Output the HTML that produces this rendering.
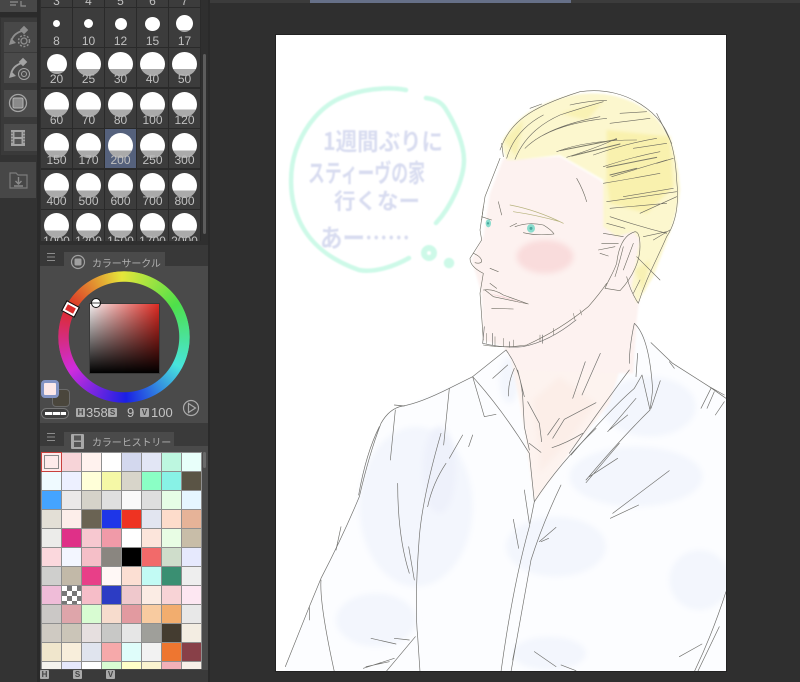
<!DOCTYPE html>
<html lang="ja"><head><meta charset="utf-8"><title>Clip Studio</title>
<style>
*{box-sizing:border-box}
html,body{margin:0;padding:0;width:800px;height:682px;overflow:hidden;background:#2f2f2f;font-family:"Liberation Sans","Noto Sans CJK JP",sans-serif}
.a{position:absolute}
#grid{left:41px;top:0;width:160px;height:241px;overflow:hidden;background:#2a2a2a}
.c{position:absolute;width:31px;height:39px;background:#3c3c3c;overflow:hidden}
.c i{position:absolute;display:block;border-radius:50%;background:linear-gradient(#fff 0,#fff 70%,#aaa 70%)}
.c i.d{background:#fff}
.c b{position:absolute;left:-4px;right:-4px;text-align:center;font-weight:400;font-size:12px;line-height:13px;color:#c0c0c0;top:27px}
.s{position:absolute;width:19px;height:18px}
.btn{position:absolute;left:4px;width:33px;background:#4a4a4a}
.tab{font-size:10px;color:#b0b0b0;white-space:nowrap;letter-spacing:-.1px}
.hsv{position:absolute;font-size:13px;color:#c4c4c4;line-height:14px;white-space:nowrap}
.k{position:absolute;width:9px;height:9px;background:#aaa;color:#444;font-size:8px;line-height:9px;text-align:center;font-weight:700;border-radius:1px}
</style></head><body>

<div class="a" style="left:0;top:0;width:38px;height:682px;background:#333"></div>
<div class="a" style="left:37px;top:0;width:3px;height:682px;background:#2a2a2a"></div>
<div class="a" style="left:208px;top:0;width:2px;height:682px;background:#2a2a2a"></div>
<div class="a" style="left:310px;top:0;width:261px;height:3px;background:#667088"></div>
<div class="a" style="left:210px;top:0;width:100px;height:3px;background:#3c3c3c"></div>
<div class="a" style="left:571px;top:0;width:229px;height:3px;background:#3c3c3c"></div>

<!-- toolbar -->
<div class="a" style="left:0;top:0;width:37px;height:12px;background:#474747"></div>
<div class="a" style="left:0;top:12px;width:37px;height:5px;background:#2b2b2b"></div>
<div class="a" style="left:1px;top:18px;width:36px;height:137px;background:#3a3a3a"></div>
<div class="btn" style="top:22px;height:30px;background:#484848"></div>
<div class="btn" style="top:53px;height:30px;background:#4a4a4a"></div>
<div class="btn" style="top:90px;height:27px;background:#4b4b4b"></div>
<div class="btn" style="top:124px;height:27px;background:#4b4b4b"></div>
<div class="a" style="left:0;top:162px;width:36px;height:36px;background:#474747"></div>
<svg class="a" style="left:0;top:0" width="40" height="200" fill="none" stroke="#8e8e8e">
 <path d="M10 2h8M10 5h6M21 1v5h5" stroke-width="1.2"/>
 <path d="M11 43Q12 34 22 31" stroke-width="1.800"/><path d="M9 45l7-2-5-5z" fill="#8e8e8e" stroke="none"/>
 <rect x="21" y="27" width="6" height="6" transform="rotate(45 24 30)" fill="#8e8e8e" stroke="none"/>
 <circle cx="24" cy="41" r="3" stroke-width="1.300"/><circle cx="24" cy="41" r="5.500" stroke-width="1.500" stroke-dasharray="2 1.6"/>
 <path d="M11 75Q12 66 22 63" stroke-width="1.800" stroke="#a4a4a4"/><path d="M9 78l7-2-5-5z" fill="#a4a4a4" stroke="none"/>
 <rect x="20" y="59" width="6" height="6" transform="rotate(45 23 62)" fill="#a4a4a4" stroke="none"/>
 <circle cx="24" cy="74" r="5.500" stroke="#a4a4a4"/><circle cx="24" cy="74" r="2.500" stroke="#a4a4a4"/>
 <circle cx="18" cy="103" r="8.500" stroke="#a4a4a4" stroke-width="1.300"/>
 <rect x="13" y="98" width="10" height="10" rx="1.500" fill="#8a8a8a" stroke="#b4b4b4"/>
 <rect x="11" y="130" width="14" height="16" fill="#a4a4a4" stroke="none"/>
 <rect x="14.500" y="132" width="7" height="5" fill="#555" stroke="none"/><rect x="14.500" y="139" width="7" height="5" fill="#555" stroke="none"/>
 <path d="M12 132v12M24 132v12" stroke="#555" stroke-width="1" stroke-dasharray="2 1"/>
 <path d="M10 173h6l2 2h9v13H10z" stroke="#7c7c7c" stroke-width="1.200"/>
 <path d="M18.500 177v6M15.500 181l3 3 3-3M14 186h9" stroke="#8a8a8a" stroke-width="1.400"/>
</svg>

<!-- brush grid -->
<div class="a" id="grid">
<div class="c" style="left:0;top:-32px"><b>3</b></div><div class="c" style="left:32px;top:-32px"><b>4</b></div><div class="c" style="left:64px;top:-32px"><b>5</b></div><div class="c" style="left:96px;top:-32px"><b>6</b></div><div class="c" style="left:128px;top:-32px"><b>7</b></div>
<div class="c" style="left:0;top:8px"><i class="d" style="left:12px;top:12px;width:7px;height:7px"></i><b>8</b></div>
<div class="c" style="left:32px;top:8px"><i class="d" style="left:11px;top:11px;width:9px;height:9px"></i><b>10</b></div>
<div class="c" style="left:64px;top:8px"><i class="d" style="left:10px;top:10px;width:12px;height:12px"></i><b>12</b></div>
<div class="c" style="left:96px;top:8px"><i class="d" style="left:8px;top:9px;width:15px;height:14px"></i><b>15</b></div>
<div class="c" style="left:128px;top:8px"><i style="left:7px;top:7px;width:17px;height:17px;background:linear-gradient(#fff 88%,#aaa 88%)"></i><b>17</b></div>
<div class="c" style="left:0;top:48px"><i style="left:6px;top:6px;width:20px;height:20px;background:linear-gradient(#fff 85%,#aaa 85%)"></i><b style="top:25px">20</b></div>
<div class="c" style="left:32px;top:48px"><i style="left:3px;top:4px;width:25px;height:24px"></i><b style="top:25px">25</b></div>
<div class="c" style="left:64px;top:48px"><i style="left:3px;top:4px;width:25px;height:24px"></i><b style="top:25px">30</b></div>
<div class="c" style="left:96px;top:48px"><i style="left:3px;top:4px;width:25px;height:24px"></i><b style="top:25px">40</b></div>
<div class="c" style="left:128px;top:48px"><i style="left:3px;top:4px;width:25px;height:24px"></i><b style="top:25px">50</b></div>
<div class="c" style="left:0;top:89px"><i style="left:3px;top:3px;width:25px;height:25px"></i><b style="top:25px">60</b></div>
<div class="c" style="left:32px;top:89px"><i style="left:3px;top:3px;width:25px;height:25px"></i><b style="top:25px">70</b></div>
<div class="c" style="left:64px;top:89px"><i style="left:3px;top:3px;width:25px;height:25px"></i><b style="top:25px">80</b></div>
<div class="c" style="left:96px;top:89px"><i style="left:3px;top:3px;width:25px;height:25px"></i><b style="top:25px">100</b></div>
<div class="c" style="left:128px;top:89px"><i style="left:3px;top:3px;width:25px;height:25px"></i><b style="top:25px">120</b></div>
<div class="c" style="left:0;top:129px"><i style="left:3px;top:4px;width:25px;height:25px"></i><b style="top:25px">150</b></div>
<div class="c" style="left:32px;top:129px"><i style="left:3px;top:4px;width:25px;height:25px"></i><b style="top:25px">170</b></div>
<div class="c" style="left:64px;top:129px;background:#55617c"><i style="left:3px;top:4px;width:25px;height:25px"></i><b style="top:25px">200</b></div>
<div class="c" style="left:96px;top:129px"><i style="left:3px;top:4px;width:25px;height:25px"></i><b style="top:25px">250</b></div>
<div class="c" style="left:128px;top:129px"><i style="left:3px;top:4px;width:25px;height:25px"></i><b style="top:25px">300</b></div>
<div class="c" style="left:0;top:170px"><i style="left:3px;top:3px;width:25px;height:25px"></i><b style="top:25px">400</b></div>
<div class="c" style="left:32px;top:170px"><i style="left:3px;top:3px;width:25px;height:25px"></i><b style="top:25px">500</b></div>
<div class="c" style="left:64px;top:170px"><i style="left:3px;top:3px;width:25px;height:25px"></i><b style="top:25px">600</b></div>
<div class="c" style="left:96px;top:170px"><i style="left:3px;top:3px;width:25px;height:25px"></i><b style="top:25px">700</b></div>
<div class="c" style="left:128px;top:170px"><i style="left:3px;top:3px;width:25px;height:25px"></i><b style="top:25px">800</b></div>
<div class="c" style="left:0;top:210px"><i style="left:3px;top:3px;width:25px;height:25px"></i><b style="top:25px">1000</b></div>
<div class="c" style="left:32px;top:210px"><i style="left:3px;top:3px;width:25px;height:25px"></i><b style="top:25px">1200</b></div>
<div class="c" style="left:64px;top:210px"><i style="left:3px;top:3px;width:25px;height:25px"></i><b style="top:25px">1500</b></div>
<div class="c" style="left:96px;top:210px"><i style="left:3px;top:3px;width:25px;height:25px"></i><b style="top:25px">1700</b></div>
<div class="c" style="left:128px;top:210px"><i style="left:3px;top:3px;width:25px;height:25px"></i><b style="top:25px">2000</b></div>
</div>
<div class="a" style="left:40px;top:0;width:168px;height:245px;background:#333;z-index:-1"></div>
<div class="a" style="left:203px;top:54px;width:3px;height:180px;background:#5c5c5c;border-radius:2px"></div>

<!-- colour circle panel -->
<div class="a" style="left:40px;top:245px;width:168px;height:178px;background:#4a4a4a"></div>
<div class="a" style="left:40px;top:245px;width:168px;height:21px;background:#383838"></div>
<div class="a" style="left:64px;top:252px;width:101px;height:14px;background:#4a4a4a"></div>
<svg class="a" style="left:46px;top:251px" width="14" height="12" stroke="#8c8c8c" stroke-width="1.100"><path d="M1 2.500h8M1 6h8M1 9.500h8"/></svg>
<svg class="a" style="left:70px;top:254px" width="16" height="16" fill="none"><circle cx="8" cy="8" r="6.500" stroke="#a0a0a0" stroke-width="1.200"/><rect x="4.500" y="4.500" width="7" height="7" rx="1.200" fill="#a0a0a0"/></svg>
<div class="a tab" style="left:92px;top:255px">カラーサークル</div>

<div class="a" style="left:58px;top:271px;width:132px;height:132px;border-radius:50%;background:conic-gradient(from -62deg,#dc2c26,#e6e63a 60deg,#4ee04a 120deg,#48e4dc 180deg,#1a20e4 240deg,#cf2cdc 300deg,#dc2c26 360deg);-webkit-mask:radial-gradient(circle,transparent 55px,#000 55.500px,#000 65.500px,transparent 66px);mask:radial-gradient(circle,transparent 55px,#000 55.500px,#000 65.500px,transparent 66px)"></div>
<div class="a" style="left:90px;top:304px;width:69px;height:69px;background:linear-gradient(to bottom,transparent,#000),linear-gradient(to right,#f4eeee,#de2a22);outline:1px solid #3a3a3a"></div>
<div class="a" style="left:91px;top:298px;width:10px;height:10px;border-radius:50%;background:linear-gradient(#fff 42%,#444 42%,#444 58%,#fff 58%);border:1.500px solid #111"></div>
<div class="a" style="left:64px;top:304px;width:13px;height:10px;background:#dd2b2b;border:2px solid #fff;outline:1px solid #111;transform:rotate(28deg)"></div>

<div class="a" style="left:52px;top:389px;width:18px;height:18px;background:#4a463c;border:1px solid #6a6a6a;border-radius:4px"></div>
<div class="a" style="left:41px;top:380px;width:18px;height:18px;background:#fde8e8;border:3px solid #8494c4;border-radius:4px"></div>
<div class="a" style="left:41px;top:408px;width:28px;height:11px;border:1px solid #777;border-radius:6px;background:#3f3f3f"></div>
<div class="a" style="left:45px;top:412px;width:21px;height:3px;background:repeating-linear-gradient(to right,#fff 0 7px,#777 7px 8px)"></div>
<div class="k" style="left:76px;top:408px">H</div>
<div class="hsv" style="left:86px;top:406px">358</div>
<div class="k" style="left:108px;top:408px">S</div>
<div class="hsv" style="left:127px;top:406px">9</div>
<div class="k" style="left:140px;top:408px">V</div>
<div class="hsv" style="left:151px;top:406px">100</div>
<svg class="a" style="left:182px;top:399px" width="18" height="18" fill="none" stroke="#aaa" stroke-width="1.200"><circle cx="9" cy="9" r="7.500"/><path d="M6.500 4.500 13.500 9 6.500 13.500z"/></svg>

<!-- history panel -->
<div class="a" style="left:40px;top:423px;width:168px;height:259px;background:#3a3a3a"></div>
<div class="a" style="left:64px;top:432px;width:110px;height:17px;background:#4a4a4a"></div>
<div class="a" style="left:40px;top:446px;width:168px;height:224px;background:#4a4a4a"></div>
<svg class="a" style="left:46px;top:431px" width="14" height="12" stroke="#8c8c8c" stroke-width="1.100"><path d="M1 2.500h8M1 6h8M1 9.500h8"/></svg>
<svg class="a" style="left:70px;top:434px" width="15" height="15"><rect x="1" y="0" width="13" height="15" rx="1" fill="#a8a8a8"/><rect x="4" y="1.500" width="7" height="5" fill="#555"/><rect x="4" y="8" width="7" height="5" fill="#555"/></svg>
<div class="a tab" style="left:92px;top:434px">カラーヒストリー</div>
<div class="a" style="left:41px;top:452px;width:161px;height:217px;background:#8f8f8f;overflow:hidden" id="sw">
<div class="s" style="left:1px;top:1px;background:#fdeaea"></div><div class="s" style="left:21px;top:1px;background:#f7d4d8"></div><div class="s" style="left:41px;top:1px;background:#fff2ee"></div><div class="s" style="left:61px;top:1px;background:#fff"></div><div class="s" style="left:81px;top:1px;background:#d3d8ee"></div><div class="s" style="left:101px;top:1px;background:#e2e6f5"></div><div class="s" style="left:121px;top:1px;background:#bdf7e0"></div><div class="s" style="left:141px;top:1px;background:#e8fffa"></div>
<div class="s" style="left:1px;top:20px;background:#effaff"></div><div class="s" style="left:21px;top:20px;background:#edf0ff"></div><div class="s" style="left:41px;top:20px;background:#ffffd8"></div><div class="s" style="left:61px;top:20px;background:#f5f8a6"></div><div class="s" style="left:81px;top:20px;background:#d8d5ca"></div><div class="s" style="left:101px;top:20px;background:#8affc5"></div><div class="s" style="left:121px;top:20px;background:#88f2e6"></div><div class="s" style="left:141px;top:20px;background:#5a5445"></div>
<div class="s" style="left:1px;top:39px;background:#44a4ff"></div><div class="s" style="left:21px;top:39px;background:#ebe9e8"></div><div class="s" style="left:41px;top:39px;background:#d5d2c9"></div><div class="s" style="left:61px;top:39px;background:#dfdfdf"></div><div class="s" style="left:81px;top:39px;background:#f9f9f9"></div><div class="s" style="left:101px;top:39px;background:#dedede"></div><div class="s" style="left:121px;top:39px;background:#e6fde6"></div><div class="s" style="left:141px;top:39px;background:#e6f6ff"></div>
<div class="s" style="left:1px;top:58px;background:#e3dfd6"></div><div class="s" style="left:21px;top:58px;background:#fdeeea"></div><div class="s" style="left:41px;top:58px;background:#6a6353"></div><div class="s" style="left:61px;top:58px;background:#1e36e8"></div><div class="s" style="left:81px;top:58px;background:#ee3322"></div><div class="s" style="left:101px;top:58px;background:#e2e5f0"></div><div class="s" style="left:121px;top:58px;background:#fddccb"></div><div class="s" style="left:141px;top:58px;background:#e6b398"></div>
<div class="s" style="left:1px;top:77px;background:#ececea"></div><div class="s" style="left:21px;top:77px;background:#df3088"></div><div class="s" style="left:41px;top:77px;background:#f7c8d0"></div><div class="s" style="left:61px;top:77px;background:#f09aa8"></div><div class="s" style="left:81px;top:77px;background:#fff"></div><div class="s" style="left:101px;top:77px;background:#fce5db"></div><div class="s" style="left:121px;top:77px;background:#e8fde4"></div><div class="s" style="left:141px;top:77px;background:#c8bda8"></div>
<div class="s" style="left:1px;top:96px;background:#fbd8dd"></div><div class="s" style="left:21px;top:96px;background:#f3f6ff"></div><div class="s" style="left:41px;top:96px;background:#f5bfc8"></div><div class="s" style="left:61px;top:96px;background:#8a8680"></div><div class="s" style="left:81px;top:96px;background:#000"></div><div class="s" style="left:101px;top:96px;background:#f26a6a"></div><div class="s" style="left:121px;top:96px;background:#cfddcb"></div><div class="s" style="left:141px;top:96px;background:#e6e9fd"></div>
<div class="s" style="left:1px;top:115px;background:#cfcfcd"></div><div class="s" style="left:21px;top:115px;background:#c2b9a8"></div><div class="s" style="left:41px;top:115px;background:#e83f88"></div><div class="s" style="left:61px;top:115px;background:#fff8f6"></div><div class="s" style="left:81px;top:115px;background:#fcdfd3"></div><div class="s" style="left:101px;top:115px;background:#c2fbf4"></div><div class="s" style="left:121px;top:115px;background:#3a8f72"></div><div class="s" style="left:141px;top:115px;background:#eee"></div>
<div class="s" style="left:1px;top:134px;background:#efbcd8"></div><div class="s" style="left:21px;top:134px;background:repeating-conic-gradient(#777 0 25%,#fff 0 50%) 0 0/10px 10px"></div><div class="s" style="left:41px;top:134px;background:#f6bdc8"></div><div class="s" style="left:61px;top:134px;background:#2c3cc4"></div><div class="s" style="left:81px;top:134px;background:#efc8cc"></div><div class="s" style="left:101px;top:134px;background:#fbece4"></div><div class="s" style="left:121px;top:134px;background:#f8d3d6"></div><div class="s" style="left:141px;top:134px;background:#fde7f2"></div>
<div class="s" style="left:1px;top:153px;background:#cbc8c6"></div><div class="s" style="left:21px;top:153px;background:#dea5aa"></div><div class="s" style="left:41px;top:153px;background:#d8fcd2"></div><div class="s" style="left:61px;top:153px;background:#f7dccd"></div><div class="s" style="left:81px;top:153px;background:#e29aa0"></div><div class="s" style="left:101px;top:153px;background:#f8cba0"></div><div class="s" style="left:121px;top:153px;background:#f2ad6e"></div><div class="s" style="left:141px;top:153px;background:#e8e8e8"></div>
<div class="s" style="left:1px;top:172px;background:#cfcac2"></div><div class="s" style="left:21px;top:172px;background:#cbc5b8"></div><div class="s" style="left:41px;top:172px;background:#e6dfdf"></div><div class="s" style="left:61px;top:172px;background:#c8c8c6"></div><div class="s" style="left:81px;top:172px;background:#e6e6e6"></div><div class="s" style="left:101px;top:172px;background:#9f9f9a"></div><div class="s" style="left:121px;top:172px;background:#443c30"></div><div class="s" style="left:141px;top:172px;background:#f3ede2"></div>
<div class="s" style="left:1px;top:191px;background:#f0e6cc"></div><div class="s" style="left:21px;top:191px;background:#f8eedb"></div><div class="s" style="left:41px;top:191px;background:#e0e4ee"></div><div class="s" style="left:61px;top:191px;background:#f6a9aa"></div><div class="s" style="left:81px;top:191px;background:#dffdfa"></div><div class="s" style="left:101px;top:191px;background:#f2f2f2"></div><div class="s" style="left:121px;top:191px;background:#ee7630"></div><div class="s" style="left:141px;top:191px;background:#884048"></div>
<div class="s" style="left:1px;top:210px;background:#f5f3ee"></div><div class="s" style="left:21px;top:210px;background:#e6e8fb"></div><div class="s" style="left:41px;top:210px;background:#fff"></div><div class="s" style="left:61px;top:210px;background:#d8fcd2"></div><div class="s" style="left:81px;top:210px;background:#ffffc8"></div><div class="s" style="left:101px;top:210px;background:#fbf4d0"></div><div class="s" style="left:121px;top:210px;background:#f2b0b8"></div><div class="s" style="left:141px;top:210px;background:#f8f0e8"></div>
<div class="a" style="left:0;top:0;width:21px;height:20px;border:1px solid #c8403c"></div>
<div class="a" style="left:3px;top:3px;width:15px;height:14px;border:1px solid #8a8a8a"></div>
</div>
<div class="a" style="left:203px;top:452px;width:3px;height:16px;background:#6a6a6a;border-radius:2px"></div>
<div class="k" style="left:40px;top:670px">H</div>
<div class="k" style="left:73px;top:670px">S</div>
<div class="k" style="left:106px;top:670px">V</div>

<!-- canvas -->
<div class="a" style="left:275px;top:34px;width:452px;height:638px;background:#222"></div>
<svg class="a" style="left:276px;top:35px" width="450" height="636" viewBox="276 35 450 636" fill="none" stroke-linecap="round" stroke-linejoin="round">
<defs>
<filter id="b1"><feGaussianBlur stdDeviation="0.700"/></filter>
<filter id="s1"><feGaussianBlur stdDeviation="0.250"/></filter>
<filter id="b3" x="-20%" y="-20%" width="140%" height="140%"><feGaussianBlur stdDeviation="3"/></filter>
<filter id="b5" x="-20%" y="-20%" width="140%" height="140%"><feGaussianBlur stdDeviation="5"/></filter>
<filter id="b8" x="-30%" y="-30%" width="160%" height="160%"><feGaussianBlur stdDeviation="9"/></filter>
</defs>
<rect x="276" y="35" width="450" height="636" fill="#fff"/>

<!-- speech bubble -->
<g stroke="#cdf9e8" stroke-width="4.500" filter="url(#b1)">
<path d="M406 90C385 86 360 90 343 97 322 105 305 125 296 150 289 170 289 198 299 220 308 240 325 258 359 270 375 273 395 266 409 258"/>
<path d="M426 98C435 99 441 102 445 108 456 125 464 145 464 160 464 180 450 208 436 223"/>
<circle cx="429" cy="253" r="5" stroke-width="6"/>
<circle cx="449" cy="263" r="4" fill="#cdf9e8" stroke-width="2.500"/>
</g>
<g fill="#d8dcf0" font-family="'Noto Sans CJK JP',sans-serif" font-weight="700" filter="url(#b1)">
<text x="323" y="150" font-size="24" textLength="120" lengthAdjust="spacingAndGlyphs">1週間ぶりに</text>
<text x="308" y="182" font-size="25" textLength="117" lengthAdjust="spacingAndGlyphs">スティーヴの家</text>
<text x="334" y="209" font-size="22" textLength="86" lengthAdjust="spacingAndGlyphs">行くなー</text>
<text x="320" y="247" font-size="25" textLength="90" lengthAdjust="spacingAndGlyphs">あー……</text>
</g>

<!-- shirt fills, zoom6 coords -->
<g transform="translate(276 320) scale(.33333)">
<path d="M690 90 590 170 380 258Q330 270 300 340L250 530 135 775 28 1040V1055H1350V235L1190 130 1125 68 1075 10 1000 200 880 400 775 545 740 300Z" fill="#fcfdff"/>
<g filter="url(#b8)" fill="#f3f6fd">
<ellipse cx="420" cy="560" rx="170" ry="240"/>
<ellipse cx="1120" cy="260" rx="140" ry="90"/>
<ellipse cx="1080" cy="470" rx="200" ry="90"/>
<ellipse cx="840" cy="680" rx="150" ry="90"/>
<ellipse cx="1270" cy="780" rx="90" ry="90"/>
<ellipse cx="820" cy="1000" rx="110" ry="50"/>
<ellipse cx="300" cy="900" rx="120" ry="80"/>
<ellipse cx="700" cy="180" rx="30" ry="70"/>
</g>
<ellipse cx="490" cy="450" rx="50" ry="130" fill="#eef1fb" filter="url(#b8)"/>
<path d="M700 90 745 320 775 545 880 400 1000 250 1075 10V-20H620Z" fill="#fdf3ef" filter="url(#b3)"/>
<path d="M770 240 790 400 790 460 890 350 960 250 850 170Z" fill="#fceee8" filter="url(#b8)"/>
</g>

<!-- hair and face fills, zoom5 coords -->
<g transform="translate(460 80) scale(.33333)">
<path d="M130 235 90 340 70 470 35 540 65 640 70 780 130 800 180 870 520 880 530 720 540 640 560 470 420 300 300 230Z" fill="#fdf2f0" filter="url(#b3)"/>
<ellipse cx="255" cy="530" rx="85" ry="50" fill="#f9dcdc" filter="url(#b8)"/>
<path d="M125 195C150 130 210 80 300 55 380 30 480 35 560 90 620 130 655 220 660 330 650 420 620 480 580 590L530 670 515 620 540 480 520 455 470 470 430 440 430 300 300 225 170 240 140 240Z" fill="#fcf7ce" filter="url(#b3)"/>
<g filter="url(#b5)">
<path d="M440 150 630 170 640 320 560 400 450 370 440 300Z" fill="#f9f1ae"/>
<path d="M300 100 430 65 380 120Z" fill="#f9f2b4"/>
<path d="M525 570 570 540 550 640Z" fill="#f8f1b4"/>
<path d="M130 180 190 120 170 230Z" fill="#f8f1b4"/>
</g>
<g stroke="#6c6a60" stroke-width="1.800" filter="url(#s1)">
<path d="M120 210C150 130 200 85 360 35 430 25 500 40 560 85 620 130 645 190 650 300 660 390 640 440 620 470 590 540 560 590 535 670 515 640 505 610 500 590"/>
<path d="M210 85 245 72M125 190 130 230M120 235 75 350 60 450 65 480 30 535Q30 560 70 580L60 640 70 780M70 795Q130 805 200 795 300 750 385 680 420 640 440 610"/>
<path d="M140 235Q165 150 250 105M165 238Q200 150 300 105 360 85 430 65M195 205Q260 140 420 110M225 180Q300 130 440 115M290 215Q380 180 530 180M320 232Q420 200 470 175M400 225Q500 190 590 175M430 260Q520 230 600 215M450 130 570 115M480 100 560 95M330 75Q400 60 440 62M455 290 620 240M430 310Q520 295 600 280M490 350 640 325M440 365 650 335M450 385 620 370M540 400 650 350M450 410Q540 440 620 460M590 100 635 190M590 250 640 235M520 205 620 190"/>
<path d="M440 430 495 445M430 460 490 470M425 490 475 490M420 520 445 528M415 510 465 500M550 470 620 455M530 530 600 600M540 600 520 640M580 480 630 450"/>
<path d="M300 212 470 178M335 228 480 192M440 262 590 232M450 285 530 265" stroke-width="3" stroke="#7b7a68"/>
<path d="M350 295Q370 330 380 365M525 455C490 465 475 505 470 550 460 580 445 600 435 625L480 632C520 590 540 540 540 500 540 470 535 455 525 455ZM490 500C480 540 475 560 465 590M520 490 490 570"/>
<path d="M115 365 125 405M165 440Q205 425 250 435 275 450 282 462 230 468 190 458M150 440 170 430M70 380 65 420M65 410 95 420M40 520Q65 530 65 545 60 552 45 548M90 565 115 575M70 630Q100 625 130 645L205 672M75 630 100 650 205 672M95 685 160 687M90 610 110 625"/>
<path d="M80 760V790M105 770V800M130 775V800M160 780V800M240 765V785M280 745V765M340 700 345 720M360 690 365 705" stroke-width="1.500"/>
</g>
<path d="M150 375Q230 390 310 430M160 395Q230 405 300 425" stroke="#b6b27c" stroke-width="2"/>
<ellipse cx="213" cy="445" rx="12" ry="13" fill="#8adccd"/><circle cx="213" cy="445" r="4.500" fill="#4aa69e"/>
<ellipse cx="85" cy="430" rx="8" ry="12" fill="#8adccd"/><circle cx="84" cy="430" r="3.500" fill="#4aa69e"/>
<path d="M85 640 200 672 130 650Z" fill="#f5cdd0"/>
</g>

<!-- shirt lines, zoom6 coords -->
<g transform="translate(276 320) scale(.33333)" stroke="#6f6f6c" stroke-width="2" filter="url(#s1)">
<path d="M620 70Q680 85 740 80 820 65 900 0"/>
<path d="M625 20 620 70M650 40V75M700 65V82M800 45V70"/>
<path d="M590 170 520 205Q430 250 380 258 340 265 315 310 280 400 250 530 200 650 135 775L100 860 28 1040"/>
<path d="M310 320Q270 400 248 525M195 620 180 690M135 780Q130 850 175 1055M100 860V900M355 255 385 258"/>
<path d="M690 90 590 170 625 290 660 283M590 170Q680 270 760 400L775 545M690 90Q735 150 740 230L745 320 760 390M650 175 695 135M715 145Q695 190 698 228M725 150 745 230"/>
<path d="M960 325Q850 430 775 545L760 620Q710 800 675 1055M855 495Q800 610 765 720L705 1055M775 545 760 620M720 970 710 1020"/>
<path d="M1125 68 1190 130 1300 200 1350 235M1180 125 1195 145M1305 205 1275 265M1315 215 1293 265M1345 245 1318 285M1300 200 1345 225"/>
<path d="M365 490Q365 650 400 760M398 680 415 780M495 340Q440 530 430 650 415 850 425 950L432 1055M520 205 503 375M358 270 343 420M560 345 520 415M590 345 578 380M510 430Q470 490 455 560"/>
<path d="M285 955 360 972M355 955 400 960M418 950 330 1055M262 1045 355 1015M270 1040 340 1025"/>
<path d="M1350 815Q1310 940 1255 1055M1330 920 1265 1055M1278 972 1210 1010M775 995 840 1040M855 1035 900 1052"/>
<path d="M1180 452 1010 580M1088 555 1003 595M1030 370 930 488M1025 415 940 470M840 622 790 665M818 655 795 665M745 510 760 610M712 598 728 685"/>
<path d="M973 100 918 225M928 125 890 235M960 248 865 298 830 355M850 295 815 345M920 340Q870 370 828 383M755 245 790 310 797 365M760 370 795 397"/>
<path d="M1075 10Q1120 50 1130 210L1122 270 1098 165 1075 205Q1000 270 885 405M1060 150Q985 250 880 400M1153 182 1125 265M1080 235 995 335M1055 285 1000 330M1075 10Q1060 80 1060 130M1122 270Q1040 350 930 480M1085 100 1080 170"/>
</g>
</svg>
</body></html>
